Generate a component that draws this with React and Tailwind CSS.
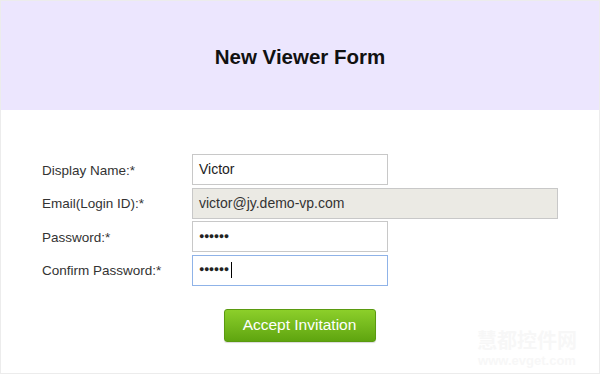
export default function App() {
  return (
    <div className="w-[600px] h-[374px] bg-white border border-[#ececec] relative overflow-hidden" style={{ fontFamily: '"Liberation Sans", Arial, sans-serif' }}>
      <div className="h-[109px] bg-[#ece6fe] flex items-center justify-center">
        <h1 className="text-[20.5px] font-bold text-[#111] mt-[4px]">New Viewer Form</h1>
      </div>
      <div className="pt-[44px] pl-[41px] flex flex-col gap-[2.5px] text-[13.5px] text-[#333]">
        <div className="flex items-center h-[31px]">
          <div className="w-[150px] pt-[3px]">Display Name:*</div>
          <div className="w-[196px] h-[31px] border border-[#c8c8c8] flex items-center px-[6px] text-[14px] text-[#222]">Victor</div>
        </div>
        <div className="flex items-center h-[31px]">
          <div className="w-[150px] pt-[3px]">Email(Login ID):*</div>
          <div className="w-[366px] h-[31px] border border-[#c8c8c8] bg-[#ebeae4] flex items-center px-[6px] text-[14px] text-[#333]">victor@jy.demo-vp.com</div>
        </div>
        <div className="flex items-center h-[31px]">
          <div className="w-[150px] pt-[3px]">Password:*</div>
          <div className="w-[196px] h-[31px] border border-[#c8c8c8] flex items-center px-[6px] text-[9px] tracking-[-0.5px] text-[#222]">●●●●●●</div>
        </div>
        <div className="flex items-center h-[31px]">
          <div className="w-[150px] pt-[3px]">Confirm Password:*</div>
          <div className="w-[196px] h-[31px] border border-[#8fb3e8] flex items-center px-[6px] text-[9px] tracking-[-0.5px] text-[#222]">●●●●●●<span className="inline-block w-px h-[16px] bg-black ml-[2px]"></span></div>
        </div>
      </div>
      <div className="flex justify-center mt-[23px] pr-[1px]">
        <div className="w-[152px] h-[33px] rounded-[3px] border border-[#5a9a10] bg-gradient-to-b from-[#8ccf2a] to-[#5fa50f] flex items-center justify-center text-white text-[15.5px] shadow-[0_1px_1px_rgba(0,0,0,0.15)]">Accept Invitation</div>
      </div>
      <div className="absolute left-[473px] top-[328px] w-[106px] flex flex-col items-center text-[#f7f7f7] leading-none whitespace-nowrap">
        <div className="text-[20px] font-bold leading-[22px]" style={{ fontFamily: '"Noto Sans CJK SC", sans-serif' }}>慧都控件网</div>
        <div className="text-[13px] font-bold mt-[3px]">www.evget.com</div>
      </div>
    </div>
  );
}
